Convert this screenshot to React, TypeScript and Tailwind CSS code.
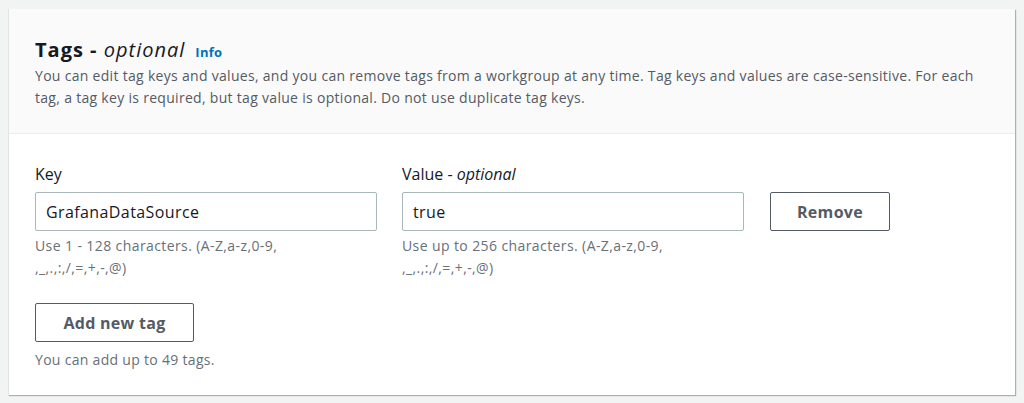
import React from "react";

const Field: React.FC<{ label: React.ReactNode; value: string; hint: string[] }> = ({ label, value, hint }) => (
  <div className="w-[342px] flex flex-col">
    <div className="text-[16px] leading-[22px] text-[#16191f] mb-[7px]">{label}</div>
    <div className="h-[39px] border border-[#aab7b8] rounded-[2px] bg-white px-[10px] flex items-center text-[16px] tracking-[0.4px] text-[#16191f]">
      {value}
    </div>
    <div className="mt-[4px] text-[14px] leading-[22px] tracking-[0.4px] text-[#687078]">
      {hint.map((h, i) => (
        <div key={i}>{h}</div>
      ))}
    </div>
  </div>
);

export default function App() {
  return (
    <div className="min-h-[403px] bg-[#f2f3f3] pt-[9px] pl-[8px] pr-[9px] font-['Open_Sans',sans-serif]">
      <div className="bg-white border-l border-[#e1e4e4] shadow-[1px_1px_1px_0_rgba(0,28,36,0.3)]">
        {/* header */}
        <div className="bg-[#fafafa] border-b border-[#eaeded] px-[26px] pt-[27px] pb-[24px]">
          <div className="flex items-baseline gap-[10px]">
            <h2 className="text-[20px] leading-[28px] font-bold tracking-[1px] text-[#16191f]">
              Tags - <span className="italic font-normal">optional</span>
            </h2>
            <span className="text-[13px] font-bold tracking-[0.3px] text-[#0073bb]">Info</span>
          </div>
          <p className="mt-[1px] text-[14px] leading-[22px] tracking-[0.3px] text-[#545b64]">
            You can edit tag keys and values, and you can remove tags from a workgroup at any time. Tag keys and values are case-sensitive. For each tag, a tag key is required, but tag value is optional. Do not use duplicate tag keys.
          </p>
        </div>
        {/* body */}
        <div className="px-[26px] pt-[29px] pb-[24px]">
          <div className="flex items-start gap-[25px]">
            <Field
              label="Key"
              value="GrafanaDataSource"
              hint={["Use 1 - 128 characters. (A-Z,a-z,0-9,", ",_,.,:,/,=,+,-,@)"]}
            />
            <Field
              label={
                <>
                  Value - <span className="italic">optional</span>
                </>
              }
              value="true"
              hint={["Use up to 256 characters. (A-Z,a-z,0-9,", ",_,.,:,/,=,+,-,@)"]}
            />
            <button className="mt-[29px] ml-[1px] h-[39px] w-[120px] border border-[#545b64] rounded-[2px] bg-white text-[16px] font-bold tracking-[0.3px] text-[#545b64]">
              Remove
            </button>
          </div>
          <button className="mt-[24px] h-[39px] w-[159px] border border-[#545b64] rounded-[2px] bg-white text-[16px] font-bold tracking-[0.3px] text-[#545b64]">
            Add new tag
          </button>
          <div className="mt-[7px] text-[14px] leading-[22px] tracking-[0.3px] text-[#687078]">You can add up to 49 tags.</div>
        </div>
      </div>
    </div>
  );
}
